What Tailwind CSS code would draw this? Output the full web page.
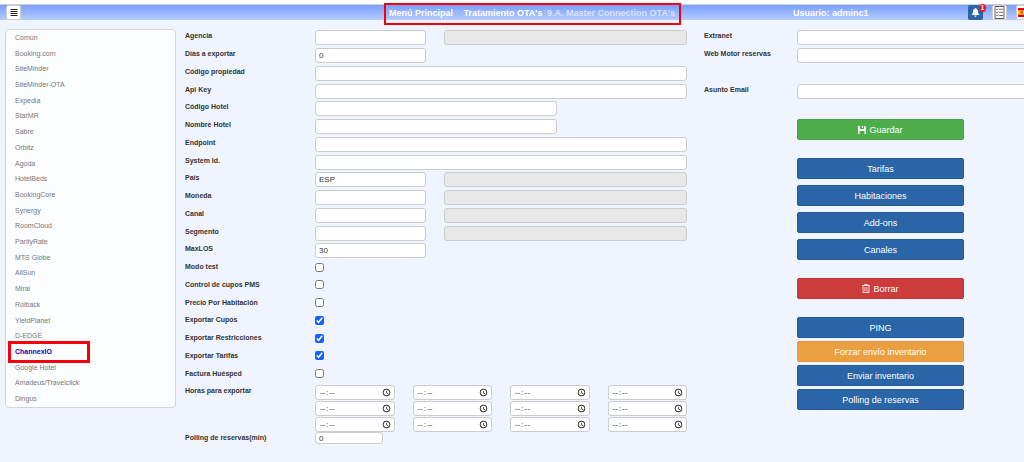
<!DOCTYPE html>
<html lang="es">
<head>
    <meta charset="UTF-8">
    <meta name="viewport" content="width=device-width, initial-scale=1.0">
    <title>9.A. Master Connection OTA's</title>
    <script src="https://cdn.jsdelivr.net/npm/@tailwindcss/browser@4"></script>
</head>
<body class="min-h-screen overflow-x-hidden bg-[#f0f4ff] font-['Liberation_Sans',Arial,sans-serif] text-[7px] leading-[10px] text-[#333]">

    <header class="border-t-4 border-white">
        <div class="grid h-4 grid-cols-8 items-center border-t border-[#ccd0d8] bg-linear-to-b from-[#7a9eff] to-[#b6cbff]">
            <div class="col-span-3 pl-[6px]">
                <button type="button" aria-label="Menú" class="flex h-[15px] w-[15px] items-center justify-center rounded-xs border border-[#ccc] bg-white">
                    <svg class="size-2" viewBox="0 0 8 8" fill="#222"><path d="M.5 0h7v1h-7zM.5 2h7v1h-7zM.5 4h7v1h-7zM.5 6h7v1h-7z"/></svg>
                </button>
            </div>
            <nav class="relative col-span-3 flex pl-[5px] text-[9px] font-bold whitespace-nowrap text-white">
                <a href="#">Menú Principal</a>
                <span class="pr-[5px] pl-[3px] text-[#b9bccb]">/</span>
                <a href="#">Tratamiento OTA's</a>
                <span class="px-px text-[#b9bccb]">/</span>
                <span class="text-[#dde2fa]">9.A. Master Connection OTA's</span>
                <div class="pointer-events-none absolute -top-[5px] left-0 h-[22px] w-[297px] border-2 border-[#f5000c]"></div>
            </nav>
            <div class="col-span-2 flex items-center pl-[25px]">
                <span class="text-[9px] font-bold whitespace-nowrap text-white">Usuario: adminc1</span>
                <div class="-mr-2 ml-auto flex items-center gap-[9px]">
                    <button type="button" aria-label="Avisos" class="relative flex h-[15px] w-[15px] items-center justify-center rounded-xs bg-[#2a65a8]">
                        <svg class="size-[9px]" viewBox="0 0 16 16" fill="#fff"><path d="M8 0c.8 0 1.300.5 1.300 1.200C11.600 1.800 12.500 3.800 12.500 6c0 3 1 4.500 3 6.500H.5c2-2 3-3.500 3-6.500 0-2.200.9-4.200 3.200-4.800C6.700.5 7.200 0 8 0zM6 13.500h4c0 1.500-.8 2.500-2 2.500s-2-1-2-2.500z"/></svg>
                        <span class="absolute -top-px -right-[3px] h-2 w-[7px] rounded-full bg-[#f5101c] text-center text-[7px] leading-[8px] font-bold text-white">1</span>
                    </button>
                    <button type="button" aria-label="Tareas" class="flex h-[15px] w-[15px] items-center justify-center rounded-xs border border-[#ccc] bg-white">
                        <svg class="h-[13px] w-[11px]" viewBox="0 0 11 13" fill="none" stroke="#333"><path d="M1 .5h9v12H1z" stroke-width=".8"/><path d="M2.300 3.300l.7.700 1.200-1.500M2.300 6.300l.7.700 1.200-1.500M2.300 9.500l.7.700 1.200-1.500M5 3.300h4M5 6.300h4M5 9.500h4" stroke-width=".7"/></svg>
                    </button>
                    <button type="button" aria-label="Idioma" class="flex h-[15px] w-4 items-center justify-center rounded-xs border border-[#ccc] bg-white">
                        <svg class="h-[9px] w-3" viewBox="0 0 12 9"><path fill="#e2001a" d="M0 0h12v9H0z"/><path fill="#ffcc22" d="M0 2.300h12v4.400H0z"/><path fill="#b5651d" d="M2.500 3.200h2.500v2.300H2.500z"/></svg>
                    </button>
                </div>
            </div>
        </div>
    </header>

    <main class="grid grid-cols-[171px_minmax(0,502fr)_minmax(0,328fr)] items-start gap-x-[9px] pt-[9px] pl-[5px]">
        <nav id="canales" class="grid h-[379px] auto-rows-fr items-center rounded-sm border border-[#d3d5da] bg-[#fcfdff] pl-[9px] text-[#777]"></nav>

        <form>
            <div id="campos" class="grid h-[355px] auto-rows-fr"></div>
            <div class="grid grid-cols-[130px_minmax(0,1fr)]">
                <span class="pt-[2px] font-bold">Horas para exportar</span>
                <div id="horas" class="grid grid-cols-4 gap-x-[18px] gap-y-px pt-px"></div>
                <label for="polling" class="pt-px font-bold">Polling de reservas(min)</label>
                <div>
                    <input id="polling" type="text" value="0" class="block h-3 w-[68px] rounded-[3px] border border-[#ccc] bg-white px-[3px] text-[8px]">
                </div>
            </div>
        </form>

        <aside class="-mr-2 pl-2">
            <div class="grid h-[71px] auto-rows-fr">
                <div class="grid grid-cols-[93px_minmax(0,1fr)] items-center">
                    <label for="extranet" class="pb-[3px] font-bold">Extranet</label>
                    <input id="extranet" type="text" class="h-[15px] rounded-[3px] border border-[#ccc] bg-white px-[3px] text-[8px]">
                </div>
                <div class="grid grid-cols-[93px_minmax(0,1fr)] items-center">
                    <label for="motor" class="pb-[3px] font-bold">Web Motor reservas</label>
                    <input id="motor" type="text" class="h-[15px] rounded-[3px] border border-[#ccc] bg-white px-[3px] text-[8px]">
                </div>
                <div></div>
                <div class="grid grid-cols-[93px_minmax(0,1fr)] items-center">
                    <label for="asunto" class="pb-[3px] font-bold">Asunto Email</label>
                    <input id="asunto" type="text" class="h-[15px] rounded-[3px] border border-[#ccc] bg-white px-[3px] text-[8px]">
                </div>
            </div>
            <div class="ml-[93px] flex w-[167px] flex-col gap-[18px] pt-[19px] text-[9px] text-white">
                <button type="button" class="flex h-[21px] items-center justify-center gap-[3px] rounded-xs border border-[#47a047] bg-[#4fae4c]">
                    <svg class="size-2" viewBox="0 0 8 8" fill="#fff"><path d="M0 0h2v3h4V0h1l1 1v7H6.500V5h-5v3H0zM4 0h1v2H4z"/></svg>
                    Guardar
                </button>
                <div class="flex flex-col gap-[6px]">
                    <button type="button" class="h-[21px] rounded-xs border border-[#235a98] bg-[#2a65a8]">Tarifas</button>
                    <button type="button" class="h-[21px] rounded-xs border border-[#235a98] bg-[#2a65a8]">Habitaciones</button>
                    <button type="button" class="h-[21px] rounded-xs border border-[#235a98] bg-[#2a65a8]">Add-ons</button>
                    <button type="button" class="h-[21px] rounded-xs border border-[#235a98] bg-[#2a65a8]">Canales</button>
                </div>
                <button type="button" class="flex h-[21px] items-center justify-center gap-[3px] rounded-xs border border-[#c23636] bg-[#cd3c3c]">
                    <svg class="h-[9px] w-2" viewBox="0 0 8 9" fill="none" stroke="#fff"><path d="M0 1.500h8M2.500 1.500v-1h3v1M1 2v6.500h6V2M3 3v4.500M5 3v4.500" stroke-width=".8"/></svg>
                    Borrar
                </button>
                <div class="flex flex-col gap-[3px]">
                    <button type="button" class="h-[21px] rounded-xs border border-[#235a98] bg-[#2a65a8]">PING</button>
                    <button type="button" class="h-[21px] rounded-xs border border-[#e2953a] bg-[#ea9f40]">Forzar envío inventario</button>
                    <button type="button" class="h-[21px] rounded-xs border border-[#235a98] bg-[#2a65a8]">Enviar inventario</button>
                    <button type="button" class="h-[21px] rounded-xs border border-[#235a98] bg-[#2a65a8]">Polling de reservas</button>
                </div>
            </div>
        </aside>
    </main>

    <script>
    const CANALES = ['Común', 'Booking.com', 'SiteMinder', 'SiteMinder-OTA', 'Expedia', 'StarMR', 'Sabre', 'Orbitz',
        'Agoda', 'HotelBeds', 'BookingCore', 'Synergy', 'RoomCloud', 'ParityRate', 'MTS Globe', 'AllSun', 'Mirai',
        'Roiback', 'YieldPlanet', 'D-EDGE', 'ChannexIO', 'Google Hotel', 'Amadeus/Travelclick', 'Dingus'];

    const CAMPOS = [
        { label: 'Agencia', tipo: 'codigo', valor: '' },
        { label: 'Días a exportar', tipo: 'corto', valor: '0' },
        { label: 'Código propiedad', tipo: 'largo', valor: '' },
        { label: 'Api Key', tipo: 'largo', valor: '' },
        { label: 'Código Hotel', tipo: 'medio', valor: '' },
        { label: 'Nombre Hotel', tipo: 'medio', valor: '' },
        { label: 'Endpoint', tipo: 'largo', valor: '' },
        { label: 'System Id.', tipo: 'largo', valor: '' },
        { label: 'País', tipo: 'codigo', valor: 'ESP' },
        { label: 'Moneda', tipo: 'codigo', valor: '' },
        { label: 'Canal', tipo: 'codigo', valor: '' },
        { label: 'Segmento', tipo: 'codigo', valor: '' },
        { label: 'MaxLOS', tipo: 'corto', valor: '30' },
        { label: 'Modo test', tipo: 'check', valor: false },
        { label: 'Control de cupos PMS', tipo: 'check', valor: false },
        { label: 'Precio Por Habitación', tipo: 'check', valor: false },
        { label: 'Exportar Cupos', tipo: 'check', valor: true },
        { label: 'Exportar Restricciones', tipo: 'check', valor: true },
        { label: 'Exportar Tarifas', tipo: 'check', valor: true },
        { label: 'Factura Huésped', tipo: 'check', valor: false }
    ];

    const ANCHOS = { codigo: 'w-[111px]', corto: 'w-[111px]', medio: 'w-[242px]', largo: 'w-full' };

    document.getElementById('canales').innerHTML = CANALES.map(canal => {
        if (canal === 'ChannexIO') {
            return `<a href="#" aria-current="page" class="relative font-bold text-[#1500c0]">${canal}
                <span class="pointer-events-none absolute -top-[6px] -left-[7px] h-[22px] w-[82px] border-3 border-[#f5000c]"></span></a>`;
        }
        return `<a href="#">${canal}</a>`;
    }).join('');

    document.getElementById('campos').innerHTML = CAMPOS.map((campo, i) => {
        let control;
        if (campo.tipo === 'check') {
            control = `<input id="campo${i}" type="checkbox" ${campo.valor ? 'checked' : ''} class="mb-[3px] size-[9px] accent-[#1463ff]">`;
        } else {
            control = `<input id="campo${i}" type="text" value="${campo.valor}" class="h-[15px] rounded-[3px] border border-[#ccc] bg-white px-[3px] text-[8px] ${ANCHOS[campo.tipo]}">`;
        }
        if (campo.tipo === 'codigo') {
            control += `<input type="text" aria-label="${campo.label} descripción" disabled class="h-[15px] min-w-0 flex-1 rounded-[3px] border border-[#ccc] bg-[#e8e8e8]">`;
        }
        return `
            <div class="grid grid-cols-[130px_minmax(0,1fr)] items-center">
                <label for="campo${i}" class="pb-[3px] font-bold">${campo.label}</label>
                <div class="flex items-center gap-[18px]">${control}</div>
            </div>
        `;
    }).join('');

    for (let i = 1; i <= 12; i++) {
        document.getElementById('horas').innerHTML += `<input type="time" aria-label="Hora ${i}" class="block h-[15px] min-w-0 rounded-[3px] border border-[#ccc] bg-white px-[3px] text-[8px] [&::-webkit-calendar-picker-indicator]:m-0 [&::-webkit-calendar-picker-indicator]:ml-auto [&::-webkit-calendar-picker-indicator]:size-[9px] [&::-webkit-calendar-picker-indicator]:p-0 [&::-webkit-datetime-edit-ampm-field]:hidden">`;
    }
    </script>
</body>
</html>
